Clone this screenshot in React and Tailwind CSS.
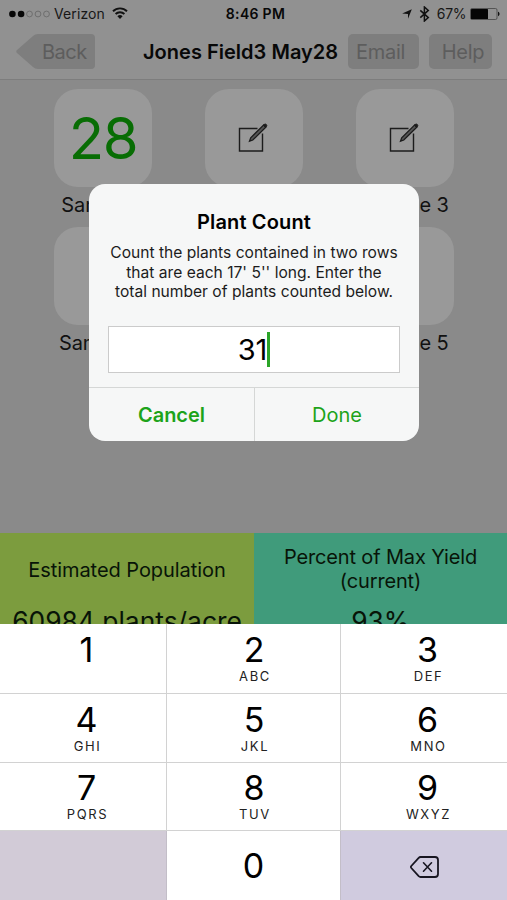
import React, { useState } from 'react';

const keys = [
  { digit: '1', letters: '' },
  { digit: '2', letters: 'ABC' },
  { digit: '3', letters: 'DEF' },
  { digit: '4', letters: 'GHI' },
  { digit: '5', letters: 'JKL' },
  { digit: '6', letters: 'MNO' },
  { digit: '7', letters: 'PQRS' },
  { digit: '8', letters: 'TUV' },
  { digit: '9', letters: 'WXYZ' },
];

const EditIcon = () => (
  <svg className="mr-[2px] mb-[2px]" width="30" height="30" viewBox="0 0 30 30" fill="none" stroke="#1c1c1c">
    <path d="M19.5 6.5H1.5v22.5h23V11.5" strokeWidth="1.4" />
    <path d="M11.5 19.2l1.2-3.4L25.8 2.8l2.2 2.2L14.8 18z" fill="#555" strokeWidth="1.3" />
    <path d="M25.3 3.3l1.1-1.1c1.2-1 3.2.9 2.2 2.2l-1.1 1.1z" fill="#1c1c1c" strokeWidth="0.8" />
  </svg>
);

const StatusBar = () => (
  <div className="flex h-[27px] items-center justify-between pl-[9px] pr-[7px] text-[14px] text-[#171717]">
    <div className="flex w-[150px] items-center">
      <svg width="42" height="8" viewBox="0 0 42 8">
        <circle cx="3.4" cy="4" r="3.3" fill="#080808" />
        <circle cx="12.1" cy="4" r="3.3" fill="#080808" />
        <circle cx="20.5" cy="4" r="2.9" fill="none" stroke="#666" strokeWidth="0.8" />
        <circle cx="29" cy="4" r="2.9" fill="none" stroke="#666" strokeWidth="0.8" />
        <circle cx="37.5" cy="4" r="2.9" fill="none" stroke="#666" strokeWidth="0.8" />
      </svg>
      <span className="ml-[3px] tracking-[0.1px]">Verizon</span>
      <svg className="ml-[7px] mb-[2px]" width="16" height="12" viewBox="0 0 16 12" fill="none" stroke="#111" strokeWidth="1.9">
        <path d="M1 4.2a10 10 0 0 1 14 0" />
        <path d="M3.6 7a6.3 6.3 0 0 1 8.8 0" />
        <path d="M8 12L5.4 9.3a3.7 3.7 0 0 1 5.2 0z" fill="#111" stroke="none" />
      </svg>
    </div>
    <span className="pl-[2px] text-[14px] font-semibold tracking-[0.3px] text-[#080808]">8:46 PM</span>
    <div className="flex w-[150px] items-center justify-end">
      <svg width="10" height="10" viewBox="0 0 11 11" fill="#111">
        <path d="M10.8.2L6.600 10.800V5.500L.2 4.900z" />
      </svg>
      <svg className="ml-[7px]" width="11" height="16" viewBox="0 0 11 16" fill="none" stroke="#111" strokeWidth="1.5">
        <path d="M1.3 4.400l8 7.200-3.900 3.400V1l3.900 3.400-8 7.200" />
      </svg>
      <span className="ml-[7px] tracking-[-0.4px]">67%</span>
      <svg className="ml-[4px]" width="30" height="12" viewBox="0 0 30 12">
        <rect x="0.5" y="0.5" width="26.5" height="11" rx="1.5" fill="none" stroke="#444" strokeWidth="0.8" />
        <rect x="1" y="1" width="17" height="10" rx="0.6" fill="#050505" />
        <path d="M28 3.8c2 .6 2 3.8 0 4.4z" fill="#111" />
      </svg>
    </div>
  </div>
);

const NavBar = () => (
  <div className="flex h-[52px] pl-[16px] pr-[15px] pt-[7px] text-[20px] text-[#5d5d5d]">
    <button className="relative h-[35px] w-[79px] text-left">
      <svg className="absolute inset-0" width="79" height="35" viewBox="0 0 79 35" fill="#7e7e7e">
        <path d="M1 16L17 2q2-2 5-2h53q4 0 4 4v27q0 4-4 4H22q-3 0-5-2L1 19q-1.500-1.500 0-3z" />
      </svg>
      <span className="relative ml-[26px] tracking-[-0.5px]">Back</span>
    </button>
    <h1 className="ml-[48px] w-[200px] whitespace-nowrap pt-[3px] text-[20px] font-semibold tracking-[0.02px] text-[#080808]">
      Jones Field3 May28
    </h1>
    <button className="ml-[5px] h-[35px] w-[71px] rounded-[5px] bg-[#7e7e7e] pr-[6px] tracking-[-0.3px]">Email</button>
    <button className="ml-[10px] h-[35px] w-[63px] rounded-[5px] bg-[#7e7e7e] pl-[5px] tracking-[-0.3px]">Help</button>
  </div>
);

const SampleTile = ({ label, children }) => (
  <div className="flex h-[138px] w-[98px] flex-col items-center">
    <div className="flex h-[98px] w-[98px] shrink-0 items-center justify-center rounded-[24px] bg-[#999999]">{children}</div>
    <span className="mt-[4px] whitespace-nowrap text-[20px] leading-[28px] tracking-[-0.1px] text-[#111]">{label}</span>
  </div>
);

const CountDialog = ({ count }) => (
  <div className="absolute left-[89px] top-[184px] flex h-[257px] w-[330px] flex-col overflow-hidden rounded-[16px] bg-[#f6f7f7]">
    <h2 className="mt-[25px] text-center text-[20px] font-semibold leading-[26px] tracking-[0.15px] text-black">Plant Count</h2>
    <p className="mt-[8px] text-center text-[15.6px] leading-[19.5px] text-[#1c1c1c]">
      Count the plants contained in two rows
      <br />
      that are each 17' 5'' long. Enter the
      <br />
      total number of plants counted below.
    </p>
    <div className="mx-[19px] mt-[24px] flex h-[47px] items-center justify-center border border-[#cbcbcb] bg-white text-[29px] text-black">
      <span className="pt-[1px] tracking-[-0.2px]">{count}</span>
      <span className="h-[35px] w-[3px] bg-[#2ba528]"></span>
    </div>
    <div className="mt-auto flex h-[54px] border-t border-[#d5d7d6] text-[20px] text-[#1da31a]">
      <button className="w-[166px] border-r border-[#d5d7d6] pt-[1px] font-semibold">Cancel</button>
      <button className="flex-1 pt-[1px]">Done</button>
    </div>
  </div>
);

const Keypad = ({ onDigit, onDelete }) => (
  <div className="grid h-[276px] grid-cols-[167px_174px_166px] grid-rows-[70px_69px_68px_69px] bg-white text-black">
    {keys.map((key) => (
      <button
        key={key.digit}
        onClick={() => onDigit(key.digit)}
        className="flex flex-col items-center border-b border-r border-[#d2d2d2] pl-[7px] pt-[8px] nth-[3n]:border-r-0 nth-[3n+2]:pl-[1px] nth-[n+7]:pt-[7px]"
      >
        <span className="text-[34px] leading-[36px]">{key.digit}</span>
        <span className="pl-[2px] text-[13px] leading-[16px] tracking-[1.6px] text-[#222]">{key.letters}</span>
      </button>
    ))}
    <div className="border-r border-[#c3bec8] bg-[#d2cbd7]"></div>
    <button onClick={() => onDigit('0')} className="border-r border-[#c3bec8] text-[34px]">0</button>
    <button onClick={onDelete} className="flex items-center justify-center bg-[#d0cbdf] pl-[1px] pt-[2px]">
      <svg width="29" height="22" viewBox="0 0 29 22" fill="none" stroke="#171520" strokeWidth="1.8" strokeLinejoin="round" strokeLinecap="round">
        <path d="M10.500 1H25q3 0 3 3v14q0 3-3 3H10.500q-1 0-1.800-.8L1.300 12q-.8-1 0-2L8.700 1.800Q9.500 1 10.500 1z" />
        <path d="M13.500 6.800l8 8.400M21.500 6.800l-8 8.400" strokeWidth="1.600" />
      </svg>
    </button>
  </div>
);

const App = () => {
  const [count, setCount] = useState('31');

  return (
    <div className="relative flex h-[900px] w-[507px] flex-col overflow-hidden bg-[#8a8a8a] font-['Inter',sans-serif]">
      <header className="h-[80px] shrink-0 border-b border-[#7d7d7d] bg-[#919191]">
        <StatusBar />
        <NavBar />
      </header>

      <main className="grid h-[453px] shrink-0 grid-cols-[98px_98px_98px] content-start gap-x-[53px] pl-[54px] pt-[9px]">
        <SampleTile label="Sample 1">
          <span className="text-[58px] tracking-[-1.5px] text-[#086d04]">28</span>
        </SampleTile>
        <SampleTile label="Sample 2">
          <EditIcon />
        </SampleTile>
        <SampleTile label="Sample 3">
          <EditIcon />
        </SampleTile>
        <SampleTile label="Sample 4" />
        <div></div>
        <SampleTile label="Sample 5" />
      </main>

      <section className="grid h-[91px] shrink-0 grid-cols-[254px_253px] overflow-hidden text-center text-[#081408]">
        <div className="bg-[#7c9c3e]">
          <h3 className="flex h-[72px] items-center justify-center pt-[2px] text-[20px] tracking-[-0.05px]">Estimated Population</h3>
          <p className="whitespace-nowrap text-[26.4px] leading-[32px]">60984 plants/acre</p>
        </div>
        <div className="bg-[#409b7b]">
          <h3 className="flex h-[72px] items-center justify-center px-6 text-[20px] leading-[24.500px] tracking-[-0.15px]">Percent of Max Yield (current)</h3>
          <p className="text-[26.4px] leading-[32px]">93%</p>
        </div>
      </section>

      <Keypad onDigit={(digit) => setCount(count + digit)} onDelete={() => setCount(count.slice(0, -1))} />
      <CountDialog count={count} />
    </div>
  );
};

export default App;
